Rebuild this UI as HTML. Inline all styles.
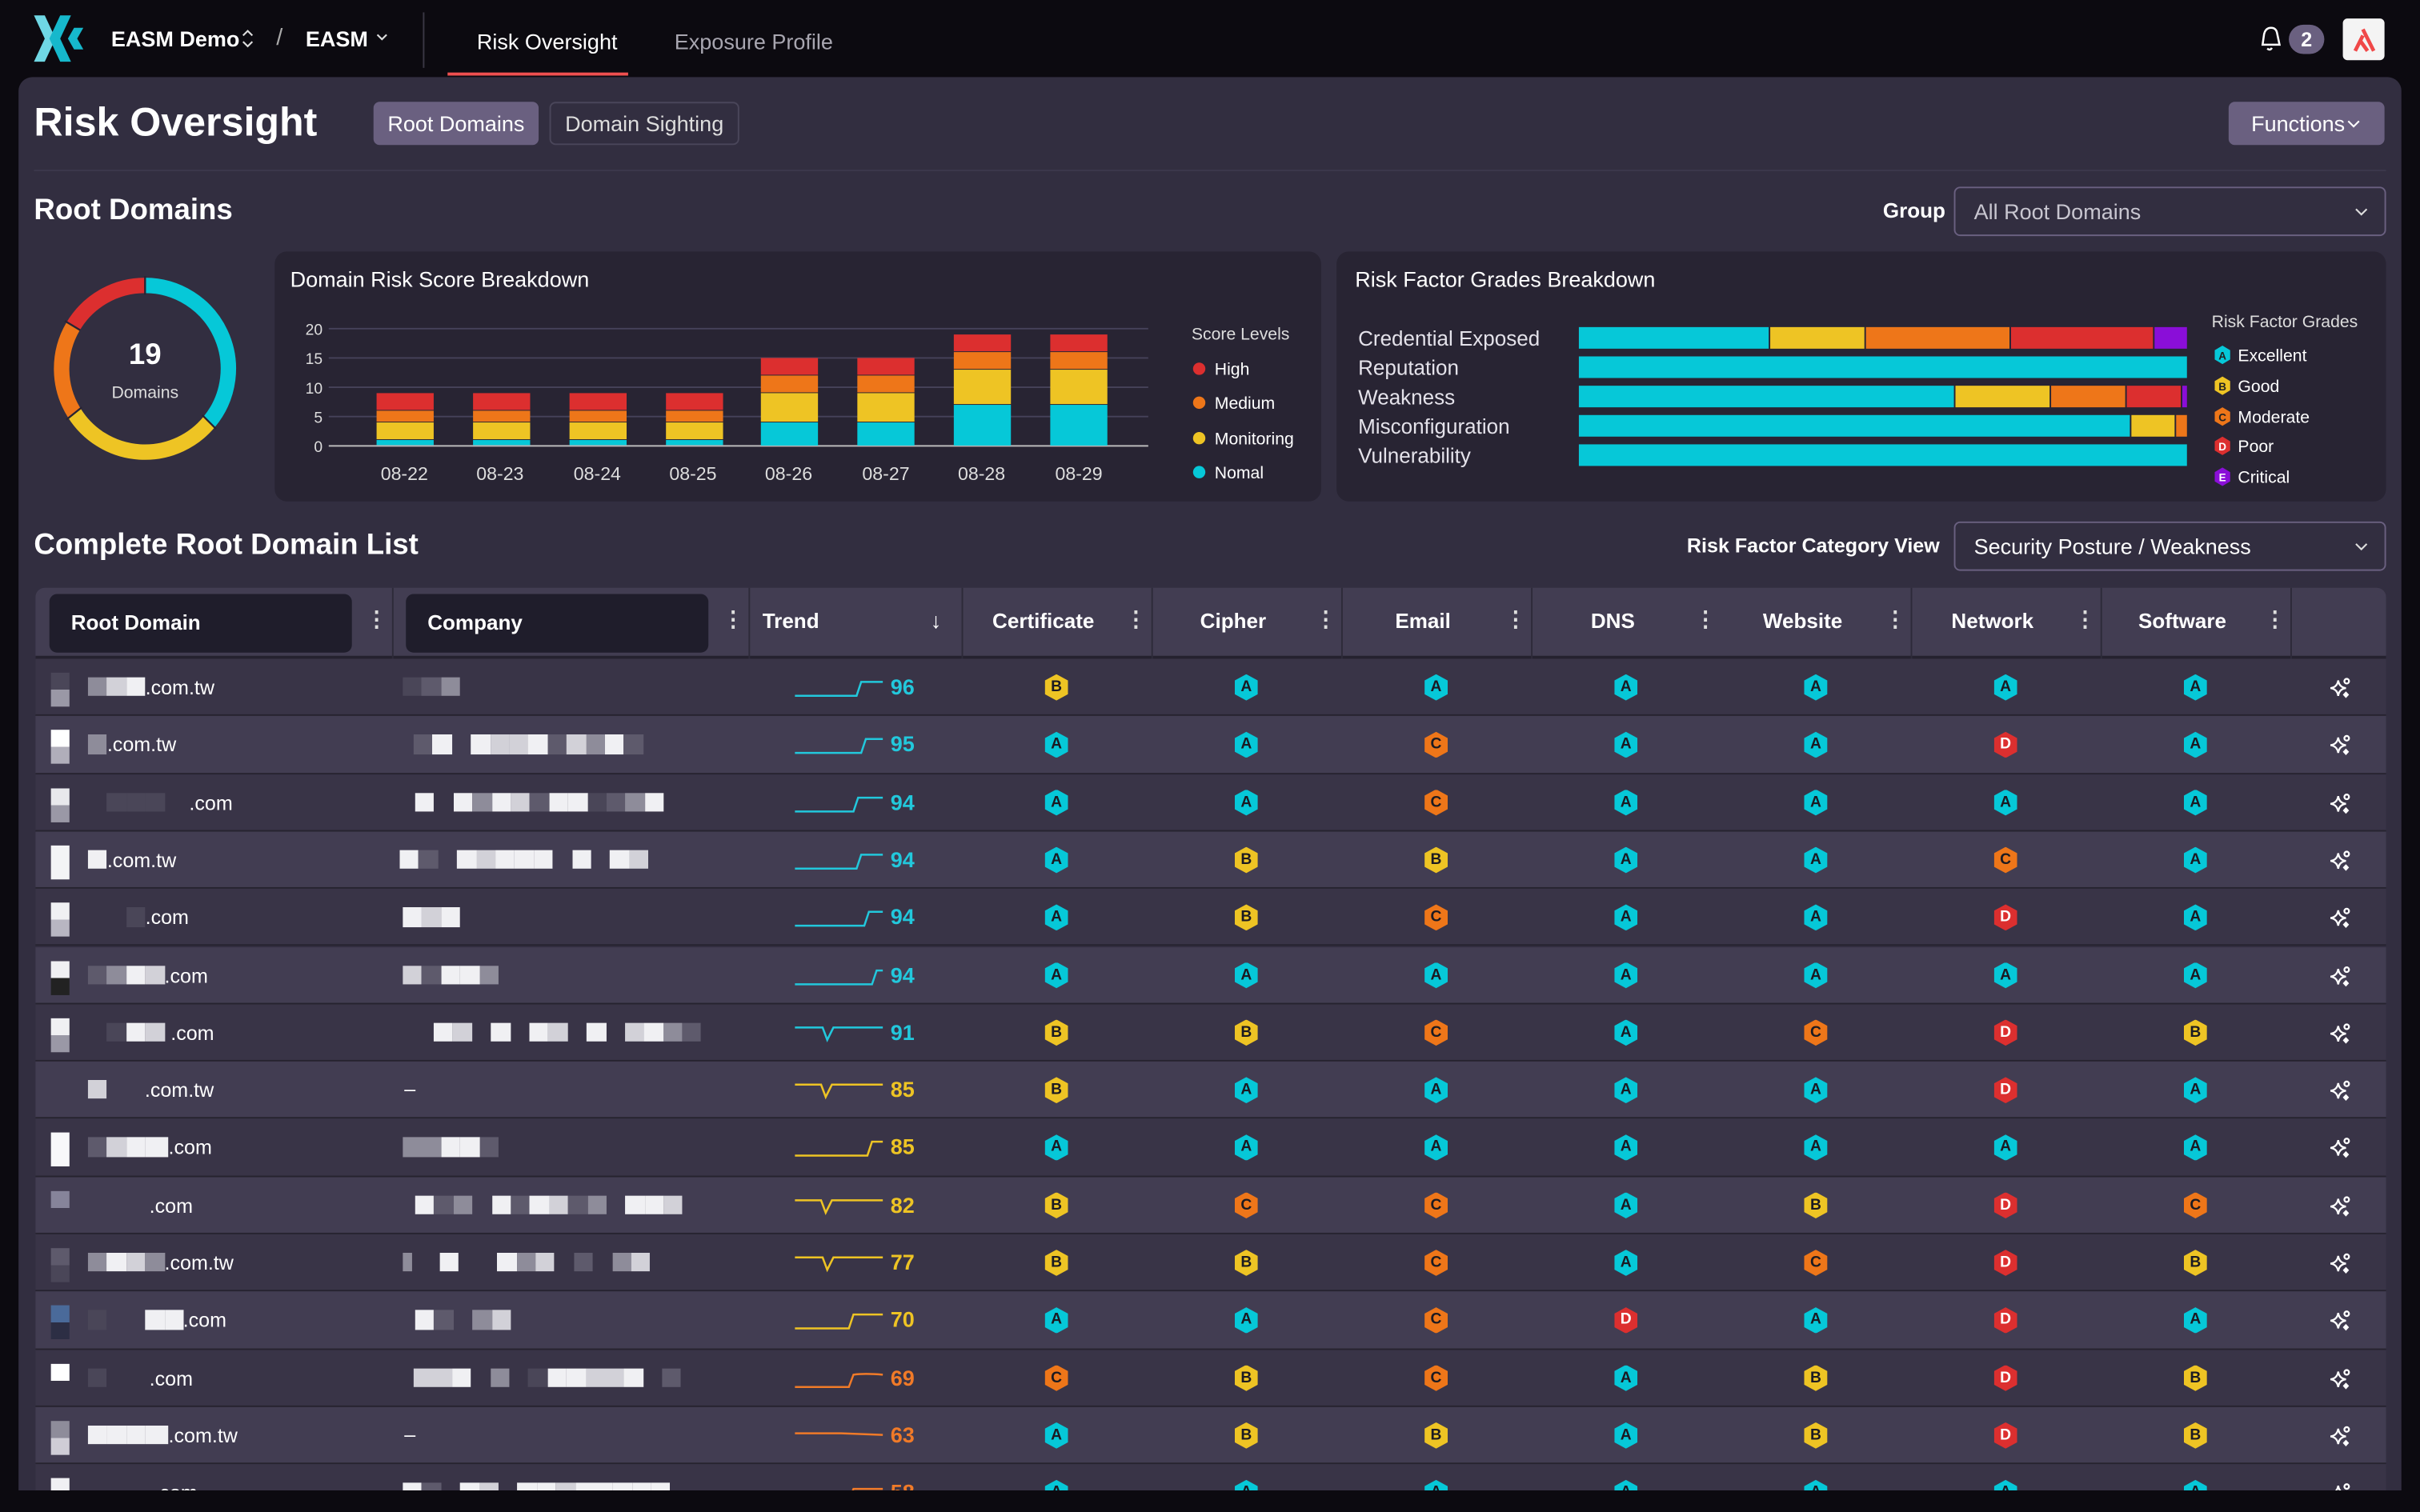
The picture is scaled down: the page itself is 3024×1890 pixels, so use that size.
<!DOCTYPE html>
<html><head><meta charset="utf-8"><style>
*{box-sizing:border-box;margin:0;padding:0}
html,body{width:3024px;height:1890px;overflow:hidden;background:#0c0a10}
body{font-family:"Liberation Sans",Arial,sans-serif;color:#fff}
#root{position:absolute;left:0;top:0;width:1568px;height:980px;overflow:hidden;transform:scale(1.928571);transform-origin:0 0;background:#0c0a10}
.a{position:absolute}
.panel{left:12px;top:50px;width:1544px;height:930px;background:#322e40;border-radius:9px 9px 0 0}
.card{background:#282433;border-radius:8px}
.btn{border-radius:4px;font-size:14px;display:flex;align-items:center;justify-content:center}
.sel{border:1.5px solid #6a6080;border-radius:4px;font-size:14px;color:#c8c6d0;padding-left:12px;display:flex;align-items:center}
.r{position:absolute;left:23px;width:1523px;height:37.3px;border-bottom:1px solid #26232f}
.o{background:#393447}.e{background:#423d52}
.b{position:absolute;top:10px;width:15px;height:17px;clip-path:polygon(50% 0,100% 24%,100% 76%,50% 100%,0 76%,0 24%);font-size:10px;line-height:17px;text-align:center;color:#1b1a22;font-weight:bold}
.A{background:#06c8d8}.B{background:#eec424}.C{background:#ee7619}.D{background:#dc2f2f;color:#fff}.E{background:#8a0ed8;color:#fff}
.sq{position:absolute;left:10px;top:9px;width:12px;height:22px}
.dm{position:absolute;left:34px;top:12px;height:13px;display:flex;align-items:flex-start;font-size:13px}
.dm i,.co i{display:inline-block;width:12.4px;height:12.4px}
.dm span{position:relative;top:-1px;margin-left:0}
.co{position:absolute;top:12px;display:flex}
.sp{position:absolute;left:492px;top:12px;width:58px;height:14px}
.sc{position:absolute;left:554px;top:10px;font-size:14px;font-weight:bold}
.ac{position:absolute;left:1486px;top:12px;width:14px;height:14px}
.w{background:#f0f0f3}.l{background:#d2d1d8}.g{background:#8e8c9a}.d{background:#5e5a6c}.x{background:transparent}.k{background:#4a4658}
.hd{position:absolute;top:381px;height:46px;font-size:14px;font-weight:bold;display:flex;align-items:center}
.dots{position:absolute;top:393px;font-size:14px;color:#ddd;font-weight:bold}
.vs{position:absolute;top:381px;width:1px;height:46px;background:#2d2a39}
</style></head><body><div id="root">

<!-- NAV -->
<svg class="a" style="left:20px;top:9px" width="38" height="32" viewBox="0 0 38 32">
<polygon points="2,1 9,1 16,16 9,31 2,31 9,16" fill="#6fd7e4"/>
<polygon points="14,1 21,1 28,16 21,31 14,31 21,16" fill="#16b8cc" transform="translate(40,0) scale(-1,1)"/>
<polygon points="28,9 34,9 30,16 34,23 28,23 24,16" fill="#16b8cc"/>
</svg>
<div class="a" style="left:72px;top:17px;font-size:14px;font-weight:bold">EASM Demo</div>
<svg class="a" style="left:156px;top:18px" width="9" height="14" viewBox="0 0 9 14"><path d="M1.5 5 L4.5 2 L7.5 5 M1.5 9 L4.5 12 L7.5 9" fill="none" stroke="#ddd" stroke-width="1.1"/></svg>
<div class="a" style="left:179px;top:16px;font-size:15px;color:#aaa">/</div>
<div class="a" style="left:198px;top:17px;font-size:14px;font-weight:bold">EASM</div>
<svg class="a" style="left:243px;top:20px" width="9" height="8" viewBox="0 0 9 8"><path d="M1.5 2.5 L4.5 5.5 L7.5 2.5" fill="none" stroke="#ddd" stroke-width="1.1"/></svg>
<div class="a" style="left:274px;top:8px;width:1px;height:36px;background:#3a3744"></div>
<div class="a" style="left:309px;top:19px;font-size:14px">Risk Oversight</div>
<div class="a" style="left:290px;top:47px;width:117px;height:2px;background:#f05050"></div>
<div class="a" style="left:437px;top:19px;font-size:14px;color:#a8a6b0">Exposure Profile</div>
<svg class="a" style="left:1462px;top:16px" width="18" height="18" viewBox="0 0 18 18"><path d="M4 13 L5 6 Q6 2 9.5 2 Q13 2 13.5 6 L15 13 Z M7 15.5 Q9 17 10 15" fill="none" stroke="#fff" stroke-width="1.3"/></svg>
<div class="a" style="left:1483px;top:16px;width:23px;height:19px;border-radius:10px;background:#6a6080;font-size:13px;font-weight:bold;text-align:center;line-height:19px">2</div>
<div class="a" style="left:1518px;top:12px;width:27px;height:27px;border-radius:3px;background:#f4f4f4"></div>
<svg class="a" style="left:1518px;top:12px" width="27" height="27" viewBox="0 0 27 27"><path d="M8 21 L13 11 M13 7 L20 21 M11 14 L16 21" stroke="#f04848" stroke-width="2.4" fill="none"/></svg>

<!-- PANEL -->
<div class="a panel"></div>
<div class="a" style="left:22px;top:64px;font-size:26px;font-weight:bold">Risk Oversight</div>
<div class="a btn" style="left:242px;top:66px;width:107px;height:28px;background:#6a6080">Root Domains</div>
<div class="a btn" style="left:356px;top:66px;width:123px;height:28px;border:1px solid #4a465a;color:#ddd">Domain Sighting</div>
<div class="a btn" style="left:1444px;top:66px;width:101px;height:28px;background:#6a6080">Functions<svg width="10" height="8" viewBox="0 0 10 8" style="margin-left:1px"><path d="M1.5 2.5 L5 6 L8.5 2.5" fill="none" stroke="#fff" stroke-width="1.1"/></svg></div>
<div class="a" style="left:22px;top:110px;width:1524px;height:1px;background:#3c384c"></div>
<div class="a" style="left:22px;top:126px;font-size:19px;font-weight:bold">Root Domains</div>
<div class="a" style="left:1220px;top:129px;font-size:13.5px;font-weight:bold">Group</div>
<div class="a sel" style="left:1266px;top:121px;width:280px;height:32px">All Root Domains<svg style="position:absolute;right:10px;top:11px" width="10" height="8" viewBox="0 0 10 8"><path d="M1.5 2.5 L5 6 L8.5 2.5" fill="none" stroke="#ddd" stroke-width="1.1"/></svg></div>

<div class="a card" style="left:178px;top:163px;width:678px;height:162px"></div>
<div class="a card" style="left:866px;top:163px;width:680px;height:162px"></div>
<div class="a" style="left:188px;top:173px;font-size:14px">Domain Risk Score Breakdown</div>
<div class="a" style="left:878px;top:173px;font-size:14px">Risk Factor Grades Breakdown</div>

<svg class="a" style="left:0;top:0" width="1568" height="340" viewBox="0 0 1568 340">
<g fill="none" stroke-width="10">
<path d="M94 185 A54 54 0 0 1 135.6 273.4" stroke="#06c8d8"/>
<path d="M135.6 273.4 A54 54 0 0 1 48.3 267.9" stroke="#eec424"/>
<path d="M48.3 267.9 A54 54 0 0 1 47.3 211.7" stroke="#ee7619"/>
<path d="M47.3 211.7 A54 54 0 0 1 94 185" stroke="#dc2f2f"/>
</g>
<g stroke="#282433" stroke-width="1.2"><line x1="94" y1="179" x2="94" y2="191"/><line x1="131" y1="269" x2="140" y2="278"/><line x1="53" y1="264" x2="43" y2="272"/><line x1="52" y1="214" x2="42" y2="208"/></g>
<text x="94" y="236" font-size="19" font-weight="bold" fill="#fff" text-anchor="middle" font-family="Liberation Sans">19</text>
<text x="94" y="258" font-size="11" fill="#ddd" text-anchor="middle" font-family="Liberation Sans">Domains</text>
<g stroke="#46425a" stroke-width="1"><line x1="213" y1="213" x2="744" y2="213"/><line x1="213" y1="232" x2="744" y2="232"/><line x1="213" y1="251" x2="744" y2="251"/><line x1="213" y1="270" x2="744" y2="270"/></g>
<line x1="213" y1="289" x2="744" y2="289" stroke="#bbb" stroke-width="1"/>
<g font-size="10" fill="#ddd" text-anchor="end" font-family="Liberation Sans"><text x="209" y="217">20</text><text x="209" y="236">15</text><text x="209" y="255">10</text><text x="209" y="274">5</text><text x="209" y="293">0</text></g>
<g id="bars">
<g id="b9"><rect x="244" y="285.2" width="37" height="3.3" fill="#06c8d8"/><rect x="244" y="273.8" width="37" height="10.9" fill="#eec424"/><rect x="244" y="266.2" width="37" height="7.1" fill="#ee7619"/><rect x="244" y="254.8" width="37" height="10.9" fill="#dc2f2f"/></g>
<use href="#b9" x="62.5"/><use href="#b9" x="125"/><use href="#b9" x="187.5"/>
<g id="b15"><rect x="493" y="273.8" width="37" height="15" fill="#06c8d8"/><rect x="493" y="254.8" width="37" height="18.5" fill="#eec424"/><rect x="493" y="243.4" width="37" height="10.9" fill="#ee7619"/><rect x="493" y="232" width="37" height="10.9" fill="#dc2f2f"/></g>
<use href="#b15" x="62.5"/>
<g id="b19"><rect x="618" y="262.4" width="37" height="26.4" fill="#06c8d8"/><rect x="618" y="239.6" width="37" height="22.3" fill="#eec424"/><rect x="618" y="228.2" width="37" height="10.9" fill="#ee7619"/><rect x="618" y="216.8" width="37" height="10.9" fill="#dc2f2f"/></g>
<use href="#b19" x="62.5"/>
</g>
<g font-size="12" fill="#ddd" text-anchor="middle" font-family="Liberation Sans"><text x="262" y="311">08-22</text><text x="324" y="311">08-23</text><text x="387" y="311">08-24</text><text x="449" y="311">08-25</text><text x="511" y="311">08-26</text><text x="574" y="311">08-27</text><text x="636" y="311">08-28</text><text x="699" y="311">08-29</text></g>
<g font-size="11" fill="#fff" font-family="Liberation Sans"><text x="772" y="220" fill="#ddd">Score Levels</text><text x="787" y="243">High</text><text x="787" y="265">Medium</text><text x="787" y="288">Monitoring</text><text x="787" y="310">Nomal</text></g>
<circle cx="777" cy="239" r="4" fill="#dc2f2f"/><circle cx="777" cy="261" r="4" fill="#ee7619"/><circle cx="777" cy="284" r="4" fill="#eec424"/><circle cx="777" cy="306" r="4" fill="#06c8d8"/>
<g font-size="13.5" fill="#e4e2ea" font-family="Liberation Sans"><text x="880" y="224">Credential Exposed</text><text x="880" y="243">Reputation</text><text x="880" y="262">Weakness</text><text x="880" y="281">Misconfiguration</text><text x="880" y="300">Vulnerability</text></g>
<rect x="1023" y="212" width="123" height="14" fill="#06c8d8"/><rect x="1147" y="212" width="61" height="14" fill="#eec424"/><rect x="1209" y="212" width="93" height="14" fill="#ee7619"/><rect x="1303" y="212" width="92" height="14" fill="#dc2f2f"/><rect x="1396" y="212" width="21" height="14" fill="#8a0ed8"/>
<rect x="1023" y="231" width="394" height="14" fill="#06c8d8"/>
<rect x="1023" y="250" width="243" height="14" fill="#06c8d8"/><rect x="1267" y="250" width="61" height="14" fill="#eec424"/><rect x="1329" y="250" width="48" height="14" fill="#ee7619"/><rect x="1378" y="250" width="35" height="14" fill="#dc2f2f"/><rect x="1414" y="250" width="3" height="14" fill="#8a0ed8"/>
<rect x="1023" y="269" width="357" height="14" fill="#06c8d8"/><rect x="1381" y="269" width="28" height="14" fill="#eec424"/><rect x="1410" y="269" width="7" height="14" fill="#ee7619"/>
<rect x="1023" y="288" width="394" height="14" fill="#06c8d8"/>
<g font-size="11" fill="#fff" font-family="Liberation Sans"><text x="1433" y="212" fill="#ddd">Risk Factor Grades</text><text x="1450" y="234">Excellent</text><text x="1450" y="254">Good</text><text x="1450" y="274">Moderate</text><text x="1450" y="293">Poor</text><text x="1450" y="313">Critical</text></g>
<g font-size="7" font-weight="bold" text-anchor="middle" font-family="Liberation Sans">
<polygon points="1440,224 1445,227 1445,233 1440,236 1435,233 1435,227" fill="#06c8d8"/><text x="1440" y="233" fill="#222">A</text>
<polygon points="1440,244 1445,247 1445,253 1440,256 1435,253 1435,247" fill="#eec424"/><text x="1440" y="253" fill="#222">B</text>
<polygon points="1440,264 1445,267 1445,273 1440,276 1435,273 1435,267" fill="#ee7619"/><text x="1440" y="273" fill="#222">C</text>
<polygon points="1440,283 1445,286 1445,292 1440,295 1435,292 1435,286" fill="#dc2f2f"/><text x="1440" y="292" fill="#fff">D</text>
<polygon points="1440,303 1445,306 1445,312 1440,315 1435,312 1435,306" fill="#8a0ed8"/><text x="1440" y="312" fill="#fff">E</text>
</g>
</svg>

<div class="a" style="left:22px;top:343px;font-size:19px;font-weight:bold">Complete Root Domain List</div>
<div class="a" style="left:1093px;top:346px;font-size:13px;font-weight:bold">Risk Factor Category View</div>
<div class="a sel" style="left:1266px;top:338px;width:280px;height:32px;color:#fff">Security Posture / Weakness<svg style="position:absolute;right:10px;top:11px" width="10" height="8" viewBox="0 0 10 8"><path d="M1.5 2.5 L5 6 L8.5 2.5" fill="none" stroke="#ddd" stroke-width="1.1"/></svg></div>

<!-- HEADER -->
<div class="a" style="left:23px;top:381px;width:1523px;height:46px;background:#423d52;border-radius:6px 6px 0 0;border-bottom:2px solid #25222f"></div>
<div class="a" style="left:32px;top:385px;width:196px;height:38px;background:#1f1d2b;border-radius:5px"></div>
<div class="a" style="left:263px;top:385px;width:196px;height:38px;background:#1f1d2b;border-radius:5px"></div>
<div class="vs" style="left:254px"></div><div class="vs" style="left:485px"></div><div class="vs" style="left:623px"></div><div class="vs" style="left:746px"></div><div class="vs" style="left:869px"></div><div class="vs" style="left:992px"></div><div class="vs" style="left:1238px"></div><div class="vs" style="left:1361px"></div><div class="vs" style="left:1484px"></div>
<div class="hd" style="left:46px;top:380px;font-size:13.5px">Root Domain</div>
<div class="hd" style="left:277px;top:380px;font-size:13.5px">Company</div>
<div class="hd" style="left:494px;top:379px;font-size:13.5px">Trend</div>
<div class="hd" style="left:603px;top:379px;font-weight:normal">&#8595;</div>
<div class="hd" style="left:623px;width:106px;justify-content:center;top:379px;font-size:13.5px">Certificate</div>
<div class="hd" style="left:746px;width:106px;justify-content:center;top:379px;font-size:13.5px">Cipher</div>
<div class="hd" style="left:869px;width:106px;justify-content:center;top:379px;font-size:13.5px">Email</div>
<div class="hd" style="left:992px;width:106px;justify-content:center;top:379px;font-size:13.5px">DNS</div>
<div class="hd" style="left:1115px;width:106px;justify-content:center;top:379px;font-size:13.5px">Website</div>
<div class="hd" style="left:1238px;width:106px;justify-content:center;top:379px;font-size:13.5px">Network</div>
<div class="hd" style="left:1361px;width:106px;justify-content:center;top:379px;font-size:13.5px">Software</div>
<div class="dots" style="left:237px">&#8942;</div><div class="dots" style="left:468px">&#8942;</div><div class="dots" style="left:729px">&#8942;</div><div class="dots" style="left:852px">&#8942;</div><div class="dots" style="left:975px">&#8942;</div><div class="dots" style="left:1098px">&#8942;</div><div class="dots" style="left:1221px">&#8942;</div><div class="dots" style="left:1344px">&#8942;</div><div class="dots" style="left:1467px">&#8942;</div>

<svg width="0" height="0" style="position:absolute"><defs>
<g id="spk" fill="none" stroke="#fff" stroke-width="1.2"><path d="M6 2 Q6.6 6.4 11 7 Q6.6 7.6 6 12 Q5.4 7.6 1 7 Q5.4 6.4 6 2Z"/><circle cx="11.5" cy="2.5" r="1.5"/><path d="M11 10 L12.2 11.3 L11 12.6 L9.8 11.3Z" fill="#fff"/></g>
</defs></svg>

<!-- ROWS -->
<div class="r o" style="top:427px"><div class="sq" style="background:linear-gradient(#4a4658 50%,#9a98a6 50%)"></div><div class="dm"><i class="g"></i><i class="l"></i><i class="w"></i><span>.com.tw</span></div><div class="co" style="left:238px"><i class="k"></i><i class="d"></i><i class="g"></i></div><svg class="sp" viewBox="0 0 58 14"><path d="M0 12 H40 L43 3 H57" fill="none" stroke="#22c8dc" stroke-width="1.3"/></svg><span class="sc" style="color:#22c8dc">96</span><span class="b B" style="left:654px">B</span><span class="b A" style="left:777px">A</span><span class="b A" style="left:900px">A</span><span class="b A" style="left:1023px">A</span><span class="b A" style="left:1146px">A</span><span class="b A" style="left:1269px">A</span><span class="b A" style="left:1392px">A</span><svg class="ac"><use href="#spk"/></svg></div>
<div class="r e" style="top:464.3px"><div class="sq" style="background:linear-gradient(#fff 50%,#b0aeba 50%)"></div><div class="dm"><i class="g"></i><span>.com.tw</span></div><div class="co" style="left:245px"><i class="d"></i><i class="w"></i><i class="x"></i><i class="w"></i><i class="l"></i><i class="l"></i><i class="w"></i><i class="d"></i><i class="l"></i><i class="g"></i><i class="w"></i><i class="d"></i></div><svg class="sp" viewBox="0 0 58 14"><path d="M0 12 H43 L46 3 H57" fill="none" stroke="#22c8dc" stroke-width="1.3"/></svg><span class="sc" style="color:#22c8dc">95</span><span class="b A" style="left:654px">A</span><span class="b A" style="left:777px">A</span><span class="b C" style="left:900px">C</span><span class="b A" style="left:1023px">A</span><span class="b A" style="left:1146px">A</span><span class="b D" style="left:1269px">D</span><span class="b A" style="left:1392px">A</span><svg class="ac"><use href="#spk"/></svg></div>
<div class="r o" style="top:501.6px"><div class="sq" style="background:linear-gradient(#e8e8ec 50%,#9a98a6 50%)"></div><div class="dm"><i class="x"></i><i class="k"></i><i class="k"></i><i class="k"></i><i class="x" style="width:16px"></i><span>.com</span></div><div class="co" style="left:246px"><i class="w"></i><i class="x"></i><i class="w"></i><i class="g"></i><i class="w"></i><i class="l"></i><i class="d"></i><i class="w"></i><i class="w"></i><i class="k"></i><i class="d"></i><i class="g"></i><i class="w"></i></div><svg class="sp" viewBox="0 0 58 14"><path d="M0 12 H38 L41 3 H57" fill="none" stroke="#22c8dc" stroke-width="1.3"/></svg><span class="sc" style="color:#22c8dc">94</span><span class="b A" style="left:654px">A</span><span class="b A" style="left:777px">A</span><span class="b C" style="left:900px">C</span><span class="b A" style="left:1023px">A</span><span class="b A" style="left:1146px">A</span><span class="b A" style="left:1269px">A</span><span class="b A" style="left:1392px">A</span><svg class="ac"><use href="#spk"/></svg></div>
<div class="r e" style="top:538.9px"><div class="sq" style="background:#f4f4f6"></div><div class="dm"><i class="w"></i><span>.com.tw</span></div><div class="co" style="left:236px"><i class="w"></i><i class="d"></i><i class="x"></i><i class="w"></i><i class="l"></i><i class="w"></i><i class="w"></i><i class="w"></i><i class="x"></i><i class="w"></i><i class="x"></i><i class="w"></i><i class="l"></i></div><svg class="sp" viewBox="0 0 58 14"><path d="M0 12 H40 L43 3 H57" fill="none" stroke="#22c8dc" stroke-width="1.3"/></svg><span class="sc" style="color:#22c8dc">94</span><span class="b A" style="left:654px">A</span><span class="b B" style="left:777px">B</span><span class="b B" style="left:900px">B</span><span class="b A" style="left:1023px">A</span><span class="b A" style="left:1146px">A</span><span class="b C" style="left:1269px">C</span><span class="b A" style="left:1392px">A</span><svg class="ac"><use href="#spk"/></svg></div>
<div class="r o" style="top:576.2px"><div class="sq" style="background:linear-gradient(#f0f0f3 50%,#b8b6c2 50%)"></div><div class="dm"><i class="x"></i><i class="x"></i><i class="k"></i><span>.com</span></div><div class="co" style="left:238px"><i class="w"></i><i class="l"></i><i class="w"></i></div><svg class="sp" viewBox="0 0 58 14"><path d="M0 12 H45 L48 3 H57" fill="none" stroke="#22c8dc" stroke-width="1.3"/></svg><span class="sc" style="color:#22c8dc">94</span><span class="b A" style="left:654px">A</span><span class="b B" style="left:777px">B</span><span class="b C" style="left:900px">C</span><span class="b A" style="left:1023px">A</span><span class="b A" style="left:1146px">A</span><span class="b D" style="left:1269px">D</span><span class="b A" style="left:1392px">A</span><svg class="ac"><use href="#spk"/></svg></div>
<div class="r e" style="top:613.5px"><div class="sq" style="background:linear-gradient(#f0f0f3 50%,#222 50%)"></div><div class="dm"><i class="d"></i><i class="g"></i><i class="w"></i><i class="l"></i><span>.com</span></div><div class="co" style="left:238px"><i class="l"></i><i class="d"></i><i class="w"></i><i class="w"></i><i class="g"></i></div><svg class="sp" viewBox="0 0 58 14"><path d="M0 12 H50 L53 3 H57" fill="none" stroke="#22c8dc" stroke-width="1.3"/></svg><span class="sc" style="color:#22c8dc">94</span><span class="b A" style="left:654px">A</span><span class="b A" style="left:777px">A</span><span class="b A" style="left:900px">A</span><span class="b A" style="left:1023px">A</span><span class="b A" style="left:1146px">A</span><span class="b A" style="left:1269px">A</span><span class="b A" style="left:1392px">A</span><svg class="ac"><use href="#spk"/></svg></div>
<div class="r o" style="top:650.8px"><div class="sq" style="background:linear-gradient(#f0f0f3 50%,#9a98a6 50%)"></div><div class="dm"><i class="x"></i><i class="k"></i><i class="w"></i><i class="l"></i><i class="x" style="width:4px"></i><span>.com</span></div><div class="co" style="left:258px"><i class="w"></i><i class="l"></i><i class="x"></i><i class="w"></i><i class="x"></i><i class="w"></i><i class="l"></i><i class="x"></i><i class="w"></i><i class="x"></i><i class="l"></i><i class="w"></i><i class="g"></i><i class="d"></i></div><svg class="sp" viewBox="0 0 58 14"><path d="M0 3 H18 L21 11 L25 3 H57" fill="none" stroke="#22c8dc" stroke-width="1.3"/></svg><span class="sc" style="color:#22c8dc">91</span><span class="b B" style="left:654px">B</span><span class="b B" style="left:777px">B</span><span class="b C" style="left:900px">C</span><span class="b A" style="left:1023px">A</span><span class="b C" style="left:1146px">C</span><span class="b D" style="left:1269px">D</span><span class="b B" style="left:1392px">B</span><svg class="ac"><use href="#spk"/></svg></div>
<div class="r e" style="top:688.1px"><div class="sq" style="background:transparent"></div><div class="dm"><i class="l"></i><i class="x"></i><i class="x" style="width:12px"></i><span>.com.tw</span></div><div class="co" style="left:239px;top:10px;font-size:13px">–</div><svg class="sp" viewBox="0 0 58 14"><path d="M0 3 H17 L20 11 L24 3 H57" fill="none" stroke="#eec424" stroke-width="1.3"/></svg><span class="sc" style="color:#eec424">85</span><span class="b B" style="left:654px">B</span><span class="b A" style="left:777px">A</span><span class="b A" style="left:900px">A</span><span class="b A" style="left:1023px">A</span><span class="b A" style="left:1146px">A</span><span class="b D" style="left:1269px">D</span><span class="b A" style="left:1392px">A</span><svg class="ac"><use href="#spk"/></svg></div>
<div class="r o" style="top:725.4px"><div class="sq" style="background:#f8f8fa"></div><div class="dm"><i class="d"></i><i class="l"></i><i class="w"></i><i class="w" style="width:15px"></i><span>.com</span></div><div class="co" style="left:238px"><i class="g"></i><i class="g"></i><i class="w"></i><i class="w"></i><i class="d"></i></div><svg class="sp" viewBox="0 0 58 14"><path d="M0 12 H47 L50 3 H57" fill="none" stroke="#eec424" stroke-width="1.3"/></svg><span class="sc" style="color:#eec424">85</span><span class="b A" style="left:654px">A</span><span class="b A" style="left:777px">A</span><span class="b A" style="left:900px">A</span><span class="b A" style="left:1023px">A</span><span class="b A" style="left:1146px">A</span><span class="b A" style="left:1269px">A</span><span class="b A" style="left:1392px">A</span><svg class="ac"><use href="#spk"/></svg></div>
<div class="r e" style="top:762.7px"><div class="sq" style="background:linear-gradient(#86849a 50%,transparent 50%)"></div><div class="dm"><i class="x"></i><i class="x"></i><i class="x" style="width:15px"></i><span>.com</span></div><div class="co" style="left:246px"><i class="w"></i><i class="d"></i><i class="g"></i><i class="x"></i><i class="w"></i><i class="d"></i><i class="w"></i><i class="l"></i><i class="d"></i><i class="g"></i><i class="x"></i><i class="w"></i><i class="w"></i><i class="l"></i></div><svg class="sp" viewBox="0 0 58 14"><path d="M0 3 H17 L20 11 L24 3 H57" fill="none" stroke="#eec424" stroke-width="1.3"/></svg><span class="sc" style="color:#eec424">82</span><span class="b B" style="left:654px">B</span><span class="b C" style="left:777px">C</span><span class="b C" style="left:900px">C</span><span class="b A" style="left:1023px">A</span><span class="b B" style="left:1146px">B</span><span class="b D" style="left:1269px">D</span><span class="b C" style="left:1392px">C</span><svg class="ac"><use href="#spk"/></svg></div>
<div class="r o" style="top:800px"><div class="sq" style="background:linear-gradient(#5e5a6c 50%,#4a4658 50%)"></div><div class="dm"><i class="g"></i><i class="w"></i><i class="l"></i><i class="g"></i><span>.com.tw</span></div><div class="co" style="left:238px"><i class="g" style="width:6px"></i><i class="x" style="width:18px"></i><i class="w"></i><i class="x"></i><i class="x"></i><i class="w"></i><i class="g"></i><i class="l"></i><i class="x"></i><i class="d"></i><i class="x"></i><i class="g"></i><i class="l"></i></div><svg class="sp" viewBox="0 0 58 14"><path d="M0 3 H18 L21 11 L25 3 H57" fill="none" stroke="#eec424" stroke-width="1.3"/></svg><span class="sc" style="color:#eec424">77</span><span class="b B" style="left:654px">B</span><span class="b B" style="left:777px">B</span><span class="b C" style="left:900px">C</span><span class="b A" style="left:1023px">A</span><span class="b C" style="left:1146px">C</span><span class="b D" style="left:1269px">D</span><span class="b B" style="left:1392px">B</span><svg class="ac"><use href="#spk"/></svg></div>
<div class="r e" style="top:837.3px"><div class="sq" style="background:linear-gradient(#4a6a9a 50%,#2c2e44 50%)"></div><div class="dm"><i class="k"></i><i class="x"></i><i class="x"></i><i class="w"></i><i class="w" style="width:12px"></i><span>.com</span></div><div class="co" style="left:246px"><i class="w"></i><i class="d"></i><i class="x"></i><i class="g"></i><i class="l"></i></div><svg class="sp" viewBox="0 0 58 14"><path d="M0 12 H35 L38 3 H57" fill="none" stroke="#eec424" stroke-width="1.3"/></svg><span class="sc" style="color:#eec424">70</span><span class="b A" style="left:654px">A</span><span class="b A" style="left:777px">A</span><span class="b C" style="left:900px">C</span><span class="b D" style="left:1023px">D</span><span class="b A" style="left:1146px">A</span><span class="b D" style="left:1269px">D</span><span class="b A" style="left:1392px">A</span><svg class="ac"><use href="#spk"/></svg></div>
<div class="r o" style="top:874.6px"><div class="sq" style="background:linear-gradient(#fff 50%,transparent 50%)"></div><div class="dm"><i class="k"></i><i class="x"></i><i class="x" style="width:15px"></i><span>.com</span></div><div class="co" style="left:245px"><i class="l"></i><i class="l"></i><i class="w"></i><i class="x"></i><i class="g"></i><i class="x"></i><i class="k"></i><i class="w"></i><i class="w"></i><i class="l"></i><i class="l"></i><i class="w"></i><i class="x"></i><i class="d"></i></div><svg class="sp" viewBox="0 0 58 14"><path d="M0 12 H35 L38 4 Q45 3 57 4" fill="none" stroke="#f07a28" stroke-width="1.3"/></svg><span class="sc" style="color:#f07a28">69</span><span class="b C" style="left:654px">C</span><span class="b B" style="left:777px">B</span><span class="b C" style="left:900px">C</span><span class="b A" style="left:1023px">A</span><span class="b B" style="left:1146px">B</span><span class="b D" style="left:1269px">D</span><span class="b B" style="left:1392px">B</span><svg class="ac"><use href="#spk"/></svg></div>
<div class="r e" style="top:911.9px"><div class="sq" style="background:linear-gradient(#8e8c9a 50%,#cfcdd6 50%)"></div><div class="dm"><i class="w"></i><i class="w"></i><i class="w"></i><i class="w" style="width:15px"></i><span>.com.tw</span></div><div class="co" style="left:239px;top:10px;font-size:13px">–</div><svg class="sp" viewBox="0 0 58 14"><path d="M0 5 H30 L57 6" fill="none" stroke="#f07a28" stroke-width="1.3"/></svg><span class="sc" style="color:#f07a28">63</span><span class="b A" style="left:654px">A</span><span class="b B" style="left:777px">B</span><span class="b B" style="left:900px">B</span><span class="b A" style="left:1023px">A</span><span class="b B" style="left:1146px">B</span><span class="b D" style="left:1269px">D</span><span class="b B" style="left:1392px">B</span><svg class="ac"><use href="#spk"/></svg></div>
<div class="r o" style="top:949.2px"><div class="sq" style="background:#f0f0f3"></div><div class="dm"><i class="x"></i><i class="x"></i><i class="x" style="width:18px"></i><span>.com</span></div><div class="co" style="left:238px"><i class="w"></i><i class="d"></i><i class="x"></i><i class="w"></i><i class="l"></i><i class="x"></i><i class="w"></i><i class="w"></i><i class="l"></i><i class="w"></i><i class="w"></i><i class="w"></i><i class="w"></i><i class="w"></i></div><svg class="sp" viewBox="0 0 58 14"><path d="M0 12 H35 L38 4 H57" fill="none" stroke="#f07a28" stroke-width="1.3"/></svg><span class="sc" style="color:#f07a28">58</span><span class="b A" style="left:654px">A</span><span class="b A" style="left:777px">A</span><span class="b A" style="left:900px">A</span><span class="b A" style="left:1023px">A</span><span class="b A" style="left:1146px">A</span><span class="b A" style="left:1269px">A</span><span class="b A" style="left:1392px">A</span><svg class="ac"><use href="#spk"/></svg></div>

<div class="a" style="left:0;top:966px;width:1568px;height:14px;background:#0c0a10"></div>
<div class="a" style="left:1556px;top:50px;width:12px;height:930px;background:#0c0a10"></div>
</div></body></html>
